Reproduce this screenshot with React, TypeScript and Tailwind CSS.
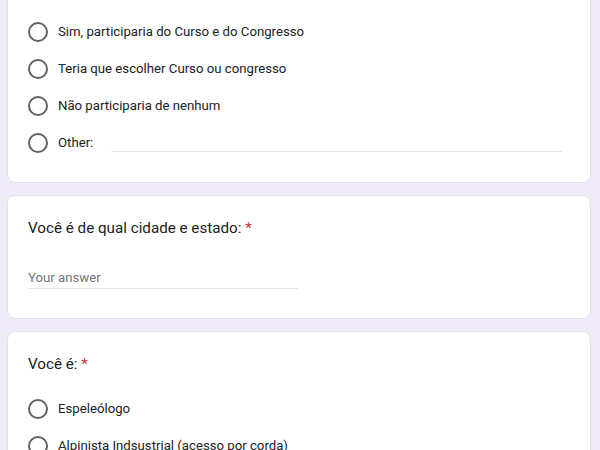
import React from "react";

const Radio = () => (
  <span className="box-border block h-[20px] w-[20px] shrink-0 rounded-full border-2 border-[#5f6368]" />
);

const Option = ({ label, children }: { label: string; children?: React.ReactNode }) => (
  <div className="flex h-[37px] items-center">
    <Radio />
    <span className="ml-[10px] text-[13.2px] leading-[20px] text-[#202124]">{label}</span>
    {children}
  </div>
);

export default function App() {
  return (
    <div
      className="box-border flex h-[450px] w-[600px] flex-col gap-[12px] overflow-hidden bg-[#f0ebf8] pl-[7px] pr-[9px]"
      style={{ fontFamily: "Roboto, 'Noto Sans', Arial, sans-serif" }}
    >
      <div className="shrink-0 rounded-b-[8px] border border-t-0 border-[#e4e0ec] bg-white pb-[21px] pl-[20px] pr-[28px] pt-[13px]">
        <Option label="Sim, participaria do Curso e do Congresso" />
        <Option label="Teria que escolher Curso ou congresso" />
        <Option label="Não participaria de nenhum" />
        <Option label="Other:">
          <div className="mb-[9px] ml-[18px] h-[1px] flex-1 self-end bg-[#e6e6e6]" />
        </Option>
      </div>

      <div className="shrink-0 rounded-[8px] border border-[#e4e0ec] bg-white pb-[29px] pl-[20px] pr-[28px] pt-[20px]">
        <div className="text-[15.2px] leading-[24px] text-[#202124]">
          Você é de qual cidade e estado: <span className="text-[#d93025]">*</span>
        </div>
        <div className="mt-[28px] w-[270px] border-b border-[#e6e6e6] text-[13.2px] leading-[20px] text-[#70757a]">
          Your answer
        </div>
      </div>

      <div className="shrink-0 rounded-t-[8px] border border-b-0 border-[#e4e0ec] bg-white pl-[20px] pr-[28px] pt-[20px]">
        <div className="text-[15.2px] leading-[24px] text-[#202124]">
          Você é: <span className="text-[#d93025]">*</span>
        </div>
        <div className="mt-[14px]">
          <Option label="Espeleólogo" />
          <Option label="Alpinista Indsustrial (acesso por corda)" />
        </div>
      </div>
    </div>
  );
}
